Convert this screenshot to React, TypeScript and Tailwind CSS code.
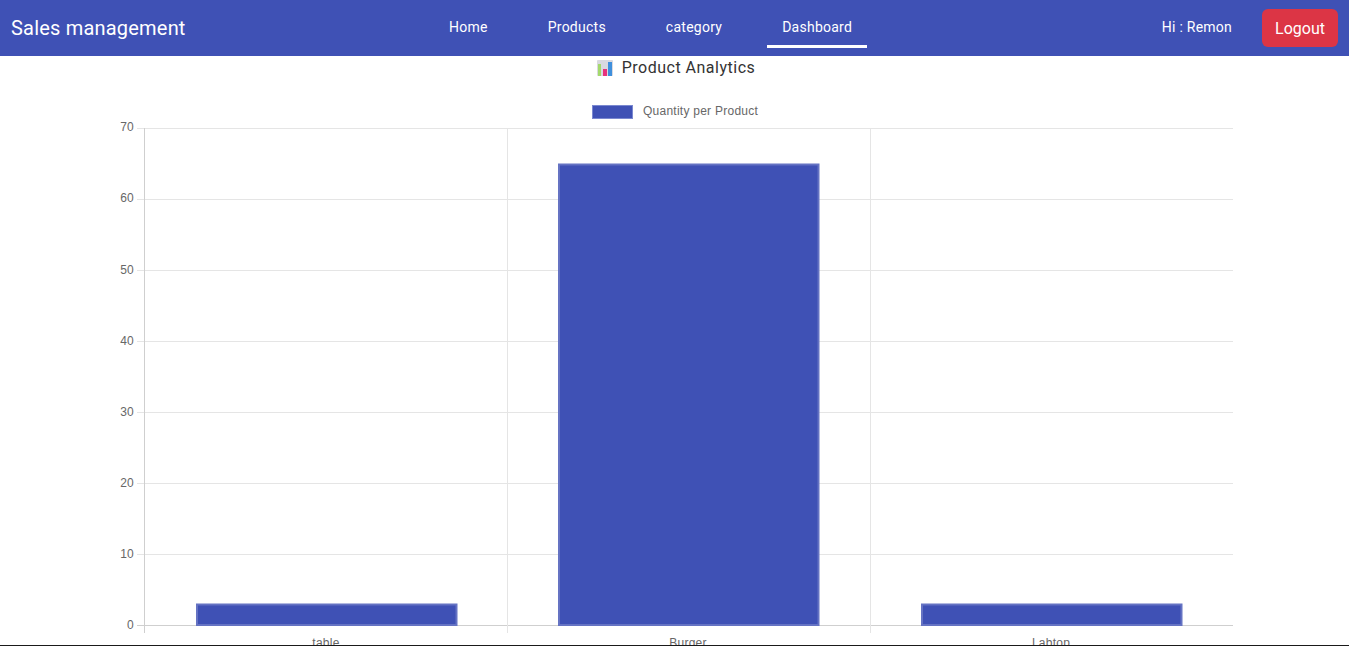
const yTicks = [
  { label: "70", y: 128, dy: 3 },
  { label: "60", y: 199, dy: 3 },
  { label: "50", y: 270, dy: 4 },
  { label: "40", y: 341, dy: 4 },
  { label: "30", y: 412, dy: 4 },
  { label: "20", y: 483, dy: 4 },
  { label: "10", y: 554, dy: 4 },
  { label: "0", y: 625, dy: 4 },
];

const bars = [
  { label: "table", x: 196, top: 603.5 },
  { label: "Burger", x: 558, top: 163.5 },
  { label: "Labtop", x: 921, top: 603.5 },
];

const xLines = [144, 507, 870];

const chartFont = { fontFamily: "'Liberation Sans', sans-serif", fontSize: 12, letterSpacing: "0.25px" };

function NavTab({ label, active }: { label: string; active?: boolean }) {
  return (
    <a className="relative flex h-full items-center px-[15px] pb-[2px] text-sm font-normal tracking-[0.25px] text-white">
      {label}
      {active && <span className="absolute bottom-[8px] left-0 right-0 h-[3px] bg-white"></span>}
    </a>
  );
}

function ChartIcon() {
  return (
    <svg width="16" height="16" viewBox="0 0 16 16" className="mr-[9px]">
      <rect x="0" y="0" width="16" height="16" rx="1" fill="#d9d9e0" />
      <rect x="1" y="4" width="3" height="12" fill="#a4d96c" />
      <rect x="6" y="9" width="4" height="7" fill="#e8327c" />
      <rect x="11" y="2" width="4" height="14" fill="#3f8fdc" />
    </svg>
  );
}

function BarChart() {
  return (
    <svg width="1349" height="549" viewBox="0 96 1349 549" className="block" style={chartFont}>
      <rect x="592.5" y="105.5" width="40" height="13" fill="#3f51b5" stroke="#7a88d0" />

      {yTicks.map((t) => (
        <line key={t.label} x1="137" x2="1233" y1={t.y + 0.5} y2={t.y + 0.5} stroke={t.y === 625 ? "#cfcfcf" : "#e5e5e5"} />
      ))}
      {xLines.map((x, i) => (
        <line key={x} x1={x + 0.5} x2={x + 0.5} y1="128" y2="633" stroke={i === 0 ? "#cfcfcf" : "#e5e5e5"} />
      ))}

      {bars.map((b) => (
        <rect key={b.label} x={b.x + 1} y={b.top + 1} width="259.5" height={625 - b.top - 1} fill="#3f51b5" stroke="#6573c3" strokeWidth="2" />
      ))}

      {/* canvas text in the shot has no colour fringe */}
      <g opacity="0.99" fill="#666666">
        <text x="643" y="115">Quantity per Product</text>
        {yTicks.map((t) => (
          <text key={t.label} x="134" y={t.y + t.dy} textAnchor="end">{t.label}</text>
        ))}
        {bars.map((b) => (
          <text key={b.label} x={b.x + 130} y="647" textAnchor="middle">{b.label}</text>
        ))}
      </g>
    </svg>
  );
}

export default function App() {
  return (
    <div className="flex h-[646px] flex-col overflow-hidden bg-white font-['Roboto',sans-serif]">
      <nav className="flex h-14 shrink-0 items-center bg-[#3f51b5] text-white">
        <div className="w-[434px] pl-[11px] text-xl font-normal tracking-[0.2px]">Sales management</div>
        <div className="flex h-full gap-[30px]">
          <NavTab label="Home" />
          <NavTab label="Products" />
          <NavTab label="category" />
          <NavTab label="Dashboard" active />
        </div>
        <div className="ml-auto flex items-center gap-[30px] pr-[11px]">
          <span className="pb-[2px] text-sm font-normal tracking-[0.25px]">Hi : Remon</span>
          <button className="h-[38px] rounded-md bg-[#dc3545] px-[13px] pt-[2px] text-base">Logout</button>
        </div>
      </nav>
      <div className="flex h-[40px] shrink-0 justify-center pt-[1px]">
        <h2 className="flex h-[22px] items-center pl-[3px] text-base font-normal tracking-[0.5px] text-[#333333]">
          <ChartIcon />
          Product Analytics
        </h2>
      </div>
      <BarChart />
      <div className="h-px bg-[#1a1a1a]"></div>
    </div>
  );
}
